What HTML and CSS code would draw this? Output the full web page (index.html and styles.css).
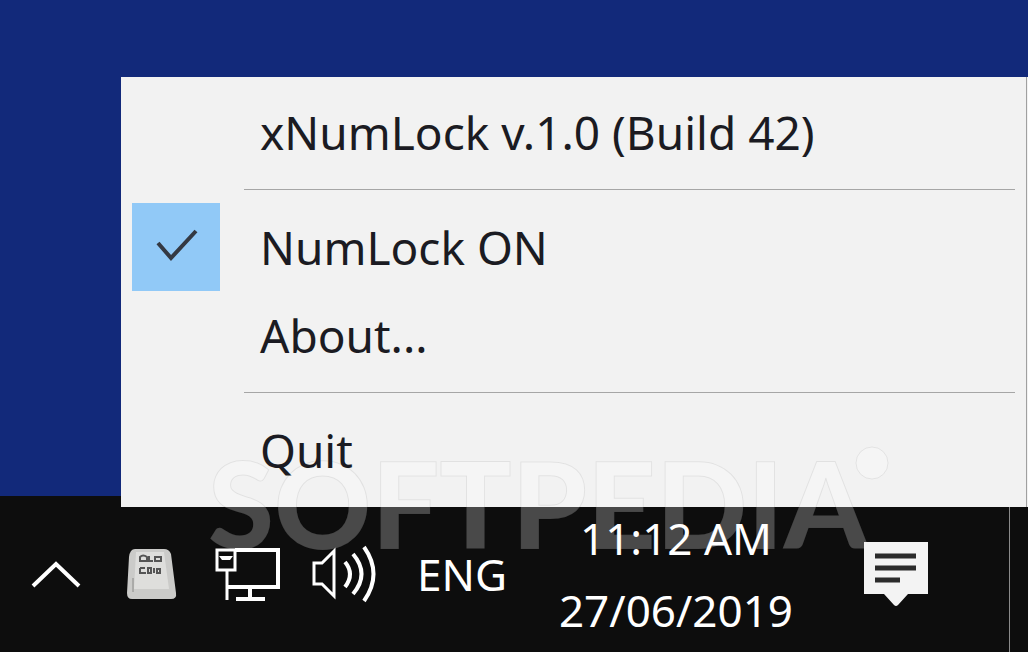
FILE: index.html
```html
<!DOCTYPE html>
<html lang="en">
<head>
    <meta charset="UTF-8">
    <meta name="viewport" content="width=device-width, initial-scale=1.0">
    <title>xNumLock</title>
    <link rel="stylesheet" href="styles.css">
</head>
<body>
    <main class="desktop"></main>

    <footer class="taskbar">
        <button class="tray-button" aria-label="Show hidden icons">
            <svg width="52" height="32" viewBox="0 0 52 32">
                <path d="M3 28 26 6l23 22" fill="none" stroke="#fff" stroke-width="4"/>
            </svg>
        </button>
        <button class="tray-button" aria-label="xNumLock">
            <svg width="50" height="52" viewBox="0 0 50 52">
                <path d="M8 1h29q5 0 7 5l5 39q1 6-5 6H5q-5 0-5-6L2 9q1-8 6-8z" fill="#cbcbc9"/>
                <path d="M9 4h28l5 37H7z" fill="#dededc"/>
                <path d="M6 30v14" fill="none" stroke="#8a8a88" stroke-width="1"/>
                <path d="M13 13V9q3-3 7 0v4zM22 8v5h4M28 13V9h6v4zM13 20v5h6M13 20h5M21 25v-5h3v5zM27 20v5M29 21h5M30 21v4h3v-4" fill="none" stroke="#555" stroke-width="2"/>
            </svg>
        </button>
        <button class="tray-button" aria-label="Network">
            <svg width="66" height="54" viewBox="0 0 66 54">
                <g fill="none" stroke="#fff" stroke-width="4">
                    <path d="M20 3h43v37H13"/>
                    <path d="M35 40v11M21 52h29"/>
                    <path d="M2 3h18v20H2zM12 24v29" stroke-width="3"/>
                </g>
                <path d="M4 9h14l-3 4H7z" fill="#fff"/>
            </svg>
        </button>
        <button class="tray-button" aria-label="Volume">
            <svg width="66" height="58" viewBox="0 0 66 58">
                <g fill="none" stroke="#fff" stroke-width="4">
                    <path d="M3 18h8L23 6v45L11 39H3z" stroke-width="3"/>
                    <path d="M34 17q10 12 0 25"/>
                    <path d="M42 9q17 20 0 40"/>
                    <path d="M53 2q19 27 0 54"/>
                </g>
            </svg>
        </button>
        <button class="tray-button language">ENG</button>
        <button class="tray-button clock">
            <time>11:12 AM</time>
            <time datetime="2019-06-27">27/06/2019</time>
        </button>
        <button class="tray-button notifications" aria-label="Notifications">
            <svg width="64" height="66" viewBox="0 0 64 66">
                <path d="M0 1h64v52H44L34 64q-2 2-4 0L20 53H0z" fill="#f3f3f3"/>
                <path d="M11 15h41M11 27h41M11 39h25" stroke="#2b2b2b" stroke-width="5"/>
            </svg>
        </button>
        <button class="show-desktop" aria-label="Show desktop"></button>
    </footer>

    <ul class="menu">
        <li><button class="menu-item">xNumLock v.1.0 (Build 42)</button></li>
        <li class="separator"></li>
        <li>
            <label class="menu-item">
                <input type="checkbox" checked>
                <svg class="tick" width="88" height="88" viewBox="0 0 88 88">
                    <path d="M26 40l13 15 25-27" fill="none" stroke="#343943" stroke-width="4"/>
                </svg>
                NumLock ON
            </label>
        </li>
        <li><button class="menu-item">About...</button></li>
        <li class="separator"></li>
        <li><button class="menu-item">Quit</button></li>
    </ul>

    <svg class="watermark" width="700" height="120" viewBox="0 0 700 120">
        <text x="3" y="109">SOFTPEDIA</text>
        <circle cx="667" cy="23" r="16"/>
    </svg>
</body>
</html>
```
FILE: styles.css
```css
:root {
    --desktop: #12297a;
    --taskbar: #0d0d0d;
    --menu: #f2f2f2;
    --highlight: #91c9f7;
    --ink: #1b1b22;
}

* {
    box-sizing: border-box;
}

body {
    position: relative;
    display: flex;
    flex-direction: column;
    min-height: 100vh;
    margin: 0;
    background: var(--desktop);
    font-family: "Noto Sans", "Open Sans", sans-serif;
    font-size: 46px;
    line-height: 72px;
    overflow: hidden;
}

button {
    padding: 0;
    border: 0;
    background: none;
    font: inherit;
    color: inherit;
}

.desktop {
    flex: 1;
}

/* taskbar */
.taskbar {
    display: flex;
    height: 156px;
    padding-left: 8px;
    background: var(--taskbar);
    color: #fff;
    font-size: 44px;
}

.tray-button {
    display: flex;
    flex: 0 0 96px;
    align-items: center;
    justify-content: center;
    z-index: 1;
}

.language {
    flex-basis: 140px;
}

.clock {
    flex-basis: 288px;
    flex-direction: column;
}

.notifications {
    flex-basis: 152px;
}

.show-desktop {
    width: 19px;
    margin-left: auto;
    border-left: 1px solid #8a8a8a;
}

/* tray menu */
.menu {
    position: absolute;
    left: 121px;
    right: 1px;
    bottom: 145px;
    margin: 0;
    padding: 11px 0 13px 11px;
    border-right: 1px solid #a0a0a0;
    background: var(--menu);
    box-shadow: 1px 0 var(--menu);
    color: var(--ink);
    list-style: none;
}

.menu-item {
    position: relative;
    z-index: 1;
    display: flex;
    align-items: center;
    width: 100%;
    height: 88px;
    padding-left: 128px;
    white-space: nowrap;
}

.menu-item input {
    position: absolute;
    left: 0;
    width: 88px;
    height: 88px;
    margin: 0;
    appearance: none;
}

.menu-item input:checked {
    background: var(--highlight);
}

.tick {
    position: absolute;
    left: 0;
}

input:not(:checked) + .tick {
    display: none;
}

.separator {
    height: 27px;
    margin: 0 11px 0 112px;
    padding-top: 13px;
}

.separator::before {
    content: "";
    display: block;
    border-top: 1px solid #a6a6a6;
}

/* translucent logo over the menu edge */
.watermark {
    position: absolute;
    left: 205px;
    bottom: 92px;
    fill: rgba(255, 255, 255, 0.25);
    stroke: rgba(0, 0, 0, 0.07);
    font-family: Lato, sans-serif;
    font-size: 120px;
    font-weight: 900;
    pointer-events: none;
}
```
